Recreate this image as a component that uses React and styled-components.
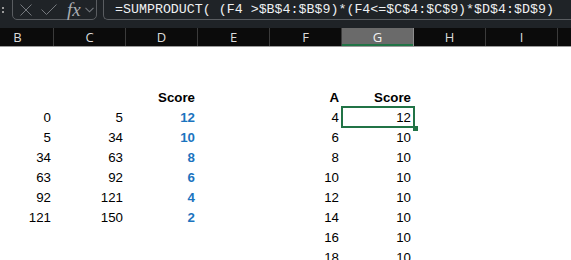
import React from 'react';
import styled, { createGlobalStyle } from 'styled-components';

const GlobalStyle = createGlobalStyle`
  html, body {
    margin: 0;
    padding: 0;
    background: #ffffff;
    overflow: hidden;
  }
`;

const Page = styled.div`
  width: 571px;
  height: 260px;
  overflow: hidden;
  background: #ffffff;
`;

const FormulaBar = styled.div`
  height: 28px;
  background: #1f2327;
  display: flex;
  align-items: flex-start;
  gap: 6px;
  padding-left: 2px;
  overflow: hidden;
`;

const Grip = styled.div`
  width: 3px;
  display: flex;
  flex-direction: column;
  gap: 2px;
  padding-top: 7px;
  margin-right: 1px;

  span {
    width: 2px;
    height: 2px;
    background: #9a9a9a;
  }
`;

const Controls = styled.div`
  margin-top: -5px;
  height: 25px;
  width: 85px;
  border: 1px solid #5a5d61;
  border-radius: 5px;
  display: flex;
  align-items: center;
  padding: 4px 0 0 7px;
  box-sizing: border-box;
  color: #74787d;

  svg {
    display: block;
    flex: none;
  }
`;

const Fx = styled.span`
  font-family: 'Liberation Serif', serif;
  font-style: italic;
  font-size: 19px;
  color: #a9adb2;
  margin: 0 4px 0 10px;
  line-height: 1;
`;

const FormulaInput = styled.div`
  flex: 1;
  margin-top: -5px;
  height: 25px;
  border: 1px solid #5a5d61;
  border-right: none;
  border-radius: 5px 0 0 5px;
  box-sizing: border-box;
  padding: 5px 0 0 11px;
  font-family: 'Liberation Mono', 'DejaVu Sans Mono', monospace;
  font-size: 13.3px;
  color: #eef0f2;
  white-space: nowrap;
  line-height: 17px;
`;

const ColumnHeaders = styled.div`
  display: grid;
  grid-template-columns: repeat(9, 72px);
  margin-left: -18px;
  height: 18px;
  background: #0b0b0b;
  border-bottom: 1px solid #9c9c9c;
`;

const HeaderCell = styled.div`
  display: flex;
  align-items: center;
  justify-content: center;
  font-family: 'Open Sans', 'Noto Sans', sans-serif;
  font-size: 13px;
  color: ${({ $active }) => ($active ? '#f2f2f2' : '#dcdcdc')};
  background: ${({ $active }) => ($active ? '#6a6a6a' : 'transparent')};
  border-right: 1px solid ${({ $active }) => ($active ? '#8e8e8e' : '#3b3b3b')};
  box-shadow: ${({ $active }) => ($active ? 'inset 0 -2px 0 #217346' : 'none')};
`;

const Sheet = styled.div`
  display: grid;
  grid-template-columns: repeat(9, 72px);
  grid-auto-rows: 20px;
  margin-left: -18px;
`;

const Cell = styled.div`
  position: relative;
  display: flex;
  align-items: center;
  justify-content: flex-end;
  padding: 1px 3px 0 0;
  font-family: 'Liberation Sans', Arial, sans-serif;
  font-size: 13.3px;
  font-weight: ${({ $bold }) => ($bold ? 700 : 400)};
  color: ${({ $blue }) => ($blue ? '#1b74bf' : '#000000')};
  outline: ${({ $selected }) => ($selected ? '2px solid #217346' : 'none')};
  outline-offset: -1px;
  z-index: ${({ $selected }) => ($selected ? 1 : 0)};
`;

const FillHandle = styled.span`
  position: absolute;
  right: -4px;
  bottom: -4px;
  width: 5px;
  height: 5px;
  background: #217346;
`;

const CancelIcon = () => (
  <svg width="12" height="12" viewBox="0 0 12 12">
    <path d="M0.5 0.5 L11.5 11.5 M11.5 0.5 L0.5 11.5" stroke="currentColor" strokeWidth="1" fill="none" />
  </svg>
);

const EnterIcon = () => (
  <svg width="16" height="11" viewBox="0 0 16 11" style={{ marginLeft: 9 }}>
    <path d="M0.5 5.5 L5.5 10.5 L15.5 0.5" stroke="currentColor" strokeWidth="1" fill="none" />
  </svg>
);

const Chevron = () => (
  <svg width="9" height="6" viewBox="0 0 9 6">
    <path d="M0.5 0.8 L4.5 4.8 L8.5 0.8" stroke="currentColor" strokeWidth="1.1" fill="none" />
  </svg>
);

const columns = ['B', 'C', 'D', 'E', 'F', 'G', 'H', 'I', 'J'];

const bands = [
  [0, 5, 12],
  [5, 34, 10],
  [34, 63, 8],
  [63, 92, 6],
  [92, 121, 4],
  [121, 150, 2],
];

const lookups = [
  [4, 12],
  [6, 10],
  [8, 10],
  [10, 10],
  [12, 10],
  [14, 10],
  [16, 10],
  [18, 10],
];

const buildRows = () => {
  const rows = [
    {},
    {},
    {
      D: { v: 'Score', bold: true },
      F: { v: 'A', bold: true },
      G: { v: 'Score', bold: true },
    },
  ];
  for (let i = 0; i < 8; i++) {
    const row = {};
    if (bands[i]) {
      row.B = { v: bands[i][0] };
      row.C = { v: bands[i][1] };
      row.D = { v: bands[i][2], bold: true, blue: true };
    }
    row.F = { v: lookups[i][0] };
    row.G = { v: lookups[i][1], selected: i === 0 };
    rows.push(row);
  }
  return rows;
};

const App = () => {
  const rows = buildRows();
  return (
    <Page>
      <GlobalStyle />
      <FormulaBar>
        <Grip>
          <span />
          <span />
        </Grip>
        <Controls>
          <CancelIcon />
          <EnterIcon />
          <Fx>fx</Fx>
          <Chevron />
        </Controls>
        <FormulaInput>=SUMPRODUCT( (F4 &gt;$B$4:$B$9)*(F4&lt;=$C$4:$C$9)*$D$4:$D$9)</FormulaInput>
      </FormulaBar>
      <ColumnHeaders>
        {columns.map((c) => (
          <HeaderCell key={c} $active={c === 'G'}>
            {c}
          </HeaderCell>
        ))}
      </ColumnHeaders>
      <Sheet>
        {rows.map((row, r) =>
          columns.map((c) => {
            const cell = row[c];
            return (
              <Cell
                key={`${c}${r}`}
                $bold={cell?.bold}
                $blue={cell?.blue}
                $selected={cell?.selected}
              >
                {cell?.v}
                {cell?.selected && <FillHandle />}
              </Cell>
            );
          })
        )}
      </Sheet>
    </Page>
  );
};

export default App;
